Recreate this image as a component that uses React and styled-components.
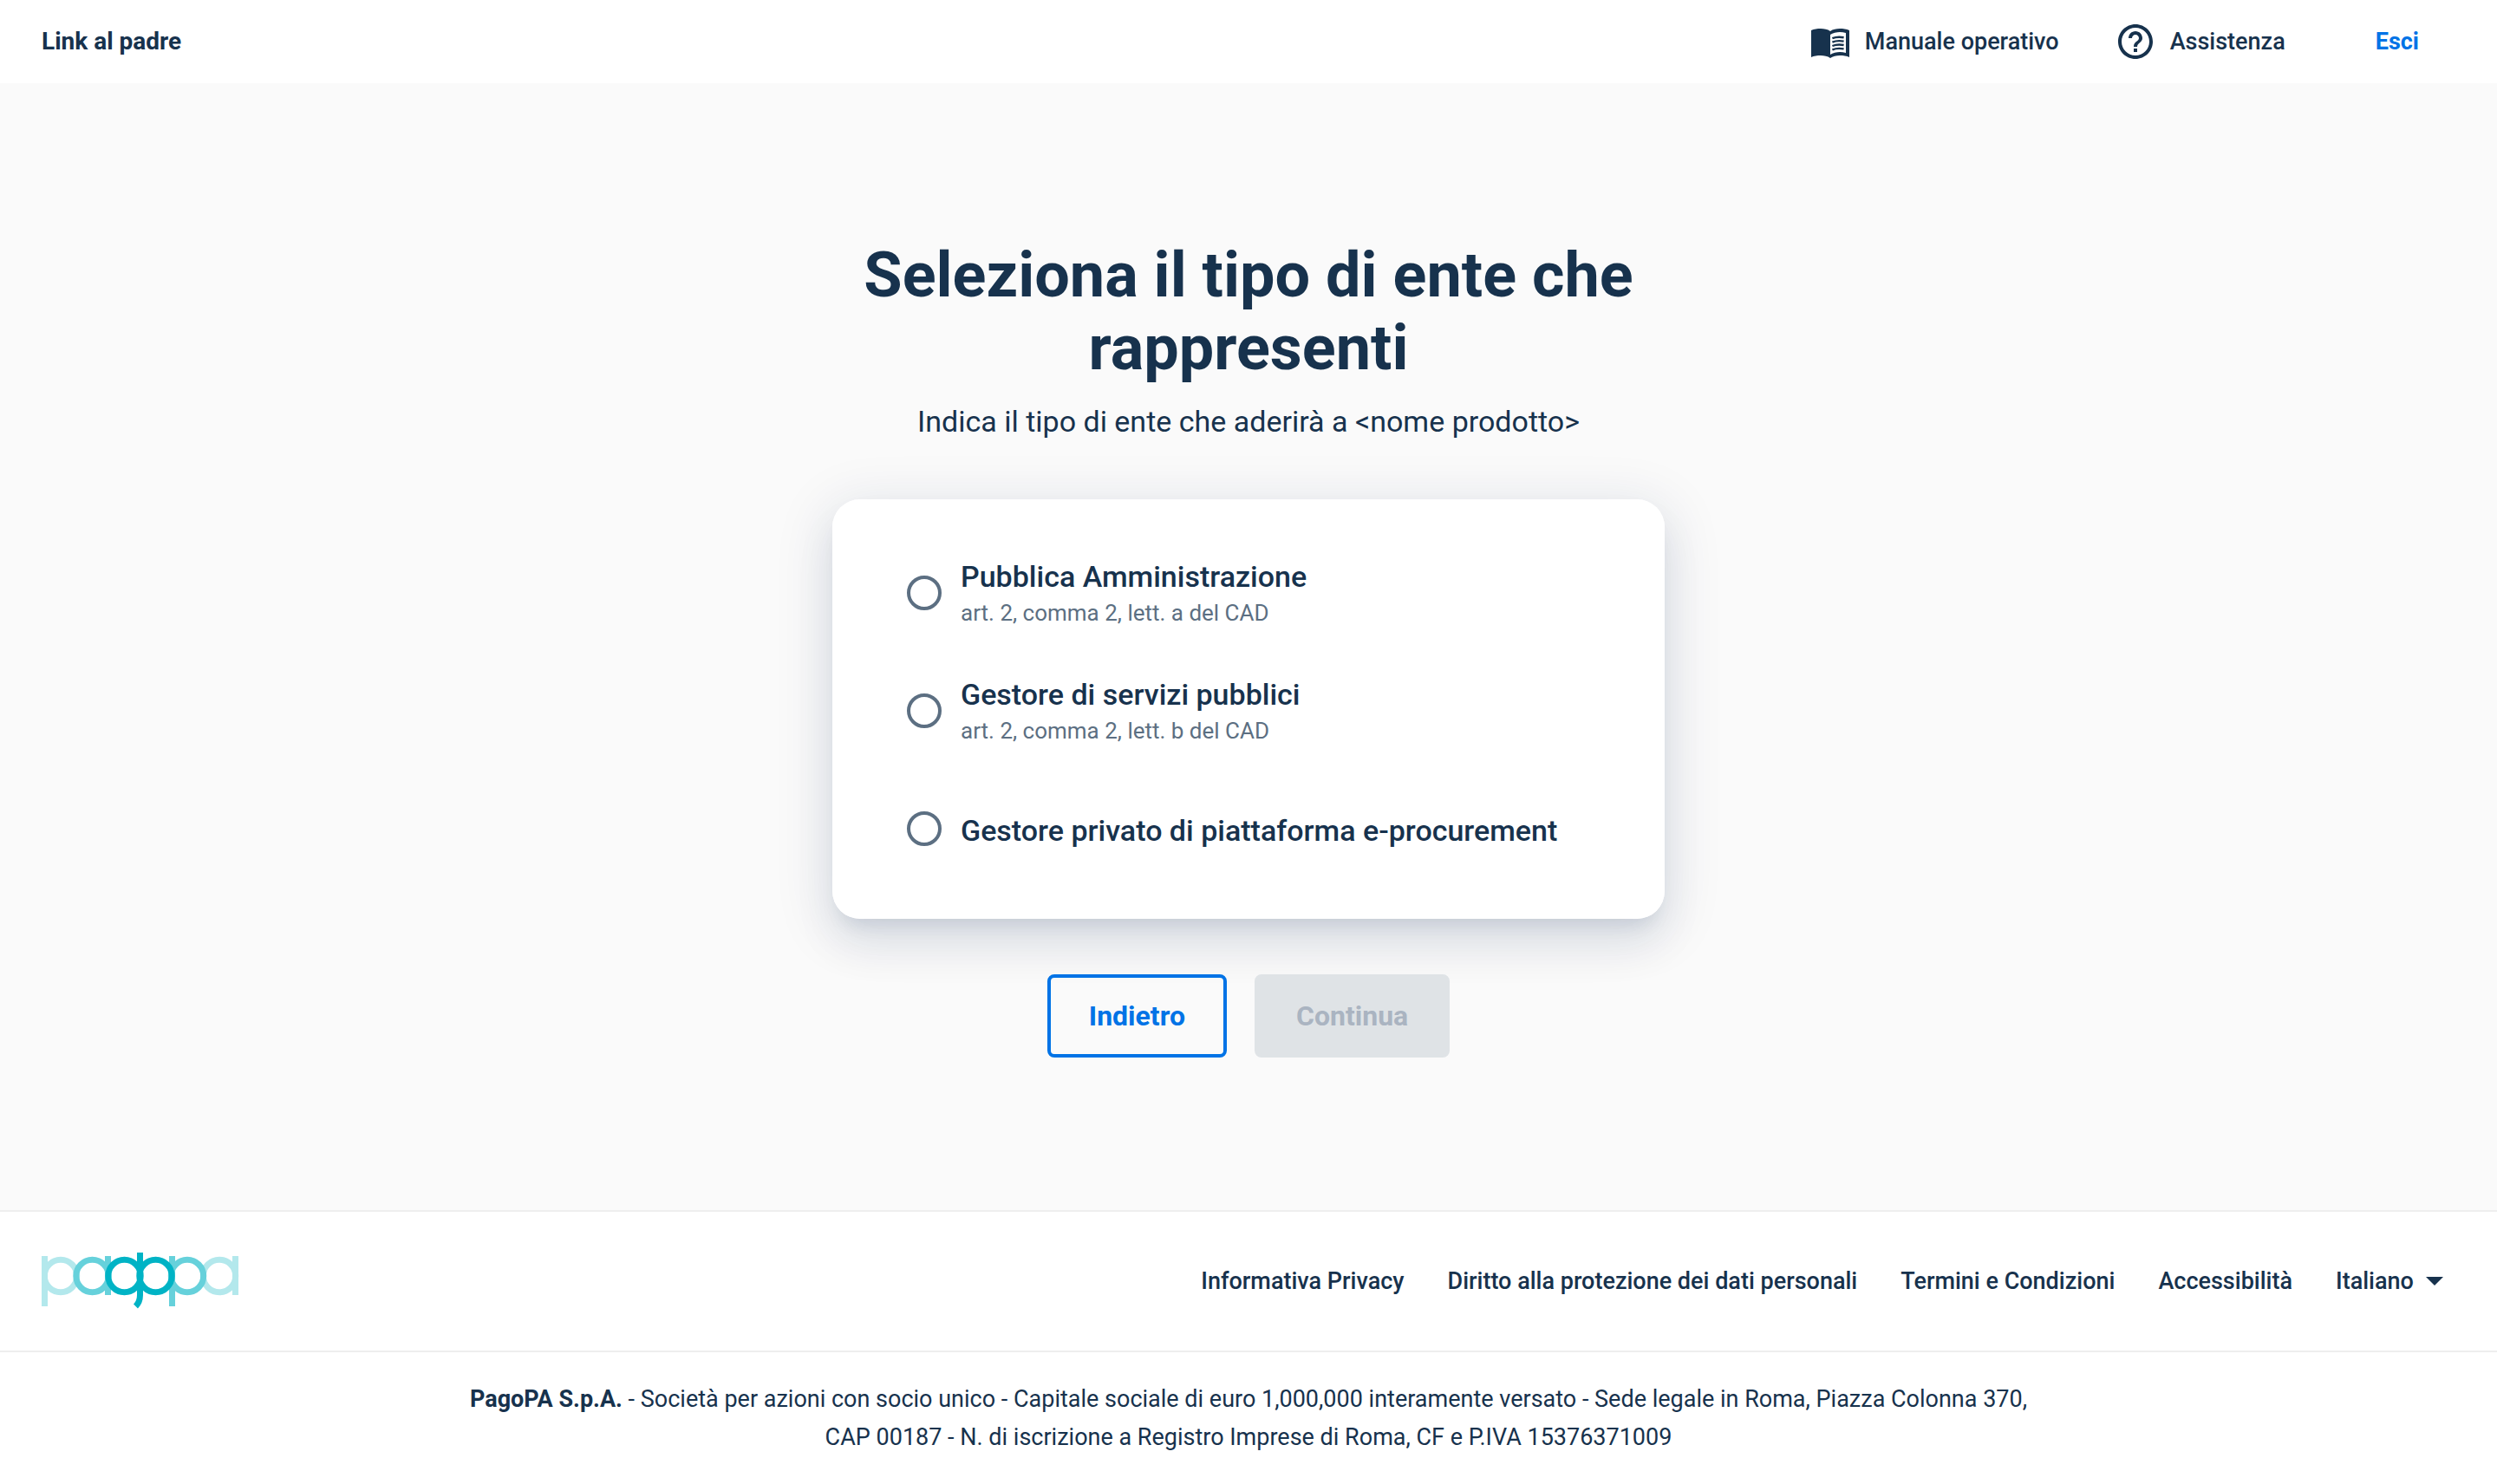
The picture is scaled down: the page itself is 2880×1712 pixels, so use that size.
import React from "react";
import styled, { createGlobalStyle, css } from "styled-components";

const Global = createGlobalStyle`
  *, *::before, *::after { box-sizing: border-box; }
  body { margin: 0; background: #ffffff; color: #17324d; font-family: Roboto, "Liberation Sans", sans-serif; }
  button, select, input { font-family: inherit; }
`;

const Page = styled.div`
  min-height: 100vh;
  display: flex;
  flex-direction: column;
`;

const TopBar = styled.header`
  height: 96px;
  padding: 0 90px 0 48px;
  display: flex;
  align-items: center;
  justify-content: space-between;
`;

const ParentLink = styled.a`
  color: #17324d;
  font-size: 28px;
  line-height: 32px;
  font-weight: 700;
  text-decoration: none;
`;

const Actions = styled.nav`
  display: flex;
  align-items: center;
  gap: 64px;
`;

const Action = styled.button`
  display: flex;
  align-items: center;
  gap: 16px;
  padding: 0;
  border: 0;
  background: none;
  color: #17324d;
  font-size: 27px;
  line-height: 32px;
  font-weight: 500;
  svg { width: 48px; height: 48px; fill: currentColor; }
`;

const Exit = styled.button`
  margin-left: 40px;
  padding: 0;
  border: 0;
  background: none;
  color: #0073e6;
  font-size: 27px;
  line-height: 32px;
  font-weight: 700;
`;

const Main = styled.main`
  flex: 1;
  display: flex;
  flex-direction: column;
  align-items: center;
  padding: 180px 48px 176px;
  background: #fafafa;
`;

const Title = styled.h1`
  max-width: 960px;
  margin: 0;
  font-size: 72px;
  line-height: 84px;
  font-weight: 700;
  text-align: center;
`;

const Subtitle = styled.p`
  margin: 16px 0 64px;
  font-size: 34px;
  line-height: 52px;
  font-weight: 400;
  text-align: center;
`;

const Card = styled.fieldset`
  width: 100%;
  max-width: 960px;
  margin: 0;
  padding: 64px 64px 60px 84px;
  border: 0;
  border-radius: 32px;
  background: #ffffff;
  box-shadow:
    0 16px 20px -10px rgba(0, 43, 85, 0.1),
    0 32px 48px 4px rgba(0, 43, 85, 0.05),
    0 12px 60px 10px rgba(0, 43, 85, 0.1);
`;

const Option = styled.label`
  display: flex;
  align-items: center;
  gap: 20px;
  min-height: 88px;
  margin-bottom: 48px;
  cursor: pointer;
  &:last-child { margin-bottom: 0; }
`;

const Radio = styled.input`
  appearance: none;
  flex: none;
  width: 40px;
  height: 40px;
  margin: 0 2px;
  border: 4px solid #5c6f82;
  border-radius: 50%;
  background: #ffffff;
  &:checked { border-color: #0073e6; background: radial-gradient(#0073e6 45%, #ffffff 50%); }
`;

const OptionText = styled.span`
  display: flex;
  flex-direction: column;
  padding-top: 4px;
`;

const OptionName = styled.span`
  font-size: 34px;
  line-height: 42px;
  font-weight: 500;
`;

const OptionNote = styled.span`
  color: #5c6f82;
  font-size: 26px;
  line-height: 42px;
`;

const Buttons = styled.div`
  display: flex;
  gap: 32px;
  margin-top: 64px;
`;

const Button = styled.button`
  height: 96px;
  padding: 0 44px;
  border: 4px solid #0073e6;
  border-radius: 8px;
  background: transparent;
  color: #0073e6;
  font-size: 32px;
  line-height: 40px;
  font-weight: 700;
  ${(p) => p.disabled && css`
    border-color: #dfe3e6;
    background: #dfe3e6;
    color: #aab4c1;
  `}
`;

const FooterBar = styled.div`
  display: flex;
  align-items: center;
  justify-content: space-between;
  height: 164px;
  padding: 0 62px 0 48px;
  border-top: 2px solid #eeeeee;
  border-bottom: 2px solid #eeeeee;
`;

const Logo = styled.svg`
  width: 228px;
  height: 66px;
`;

const FooterLinks = styled.nav`
  display: flex;
  align-items: center;
  gap: 50px;
`;

const FooterLink = styled.a`
  color: #17324d;
  font-size: 27px;
  line-height: 40px;
  font-weight: 500;
  text-decoration: none;
`;

const Language = styled.span`
  display: flex;
  align-items: center;
  gap: 14px;
  svg { width: 20px; height: 10px; fill: #17324d; }
`;

const LanguageSelect = styled.select`
  appearance: none;
  padding: 0;
  border: 0;
  background: none;
  color: #17324d;
  font-size: 27px;
  line-height: 40px;
  font-weight: 500;
`;

const Legal = styled.p`
  max-width: 1920px;
  margin: 0 auto;
  padding: 32px 48px;
  font-size: 27px;
  line-height: 44px;
  text-align: center;
  strong { font-weight: 700; }
`;

const OPTIONS = [
  { id: "pa", name: "Pubblica Amministrazione", note: "art. 2, comma 2, lett. a del CAD" },
  { id: "gsp", name: "Gestore di servizi pubblici", note: "art. 2, comma 2, lett. b del CAD" },
  { id: "ep", name: "Gestore privato di piattaforma e-procurement" },
];

const LINKS = ["Informativa Privacy", "Diritto alla protezione dei dati personali", "Termini e Condizioni", "Accessibilità"];

const BookIcon = () => (
  <svg viewBox="0 0 24 24" aria-hidden="true">
    <path d="M23 5.500c-1.600-.7-3.600-1-5.500-1-1.950 0-4.050.4-5.500 1.500-1.450-1.100-3.550-1.500-5.500-1.500S2.600 4.800 1 5.500V21c1.500-.7 3.500-1 5.500-1 1.950 0 4.050.4 5.500 1.500 1.350-.85 3.550-1.500 5.500-1.500 2 0 4 .3 5.500 1zM21 18.500c-1.100-.35-2.300-.5-3.500-.5-1.700 0-4.150.65-5.500 1.500V8c1.350-.85 3.800-1.500 5.500-1.500 1.200 0 2.400.15 3.500.5z" />
    <path
      d="M13.200 10.100c1.900-.8 4.400-.9 6.600-.5M13.200 12.300c1.900-.8 4.400-.9 6.600-.5M13.200 14.500c1.900-.8 4.400-.9 6.600-.5M13.200 16.700c1.900-.8 4.400-.9 6.600-.5"
      fill="none"
      stroke="currentColor"
      strokeWidth="1.200"
    />
  </svg>
);

const HelpIcon = () => (
  <svg viewBox="0 0 24 24" aria-hidden="true">
    <path d="M11 18h2v-2h-2zm1-16C6.480 2 2 6.480 2 12s4.480 10 10 10 10-4.480 10-10S17.520 2 12 2m0 18c-4.410 0-8-3.590-8-8s3.590-8 8-8 8 3.590 8 8-3.590 8-8 8m0-14c-2.210 0-4 1.790-4 4h2c0-1.100.9-2 2-2s2 .9 2 2c0 2-3 1.750-3 5h2c0-2.250 3-2.500 3-5 0-2.210-1.790-4-4-4" />
  </svg>
);

const PagoPaLogo = () => (
  <Logo viewBox="0 0 228 66" role="img" aria-label="PagoPA" fill="none" strokeWidth="7">
    <g stroke="#b3e8ec">
      <path d="M3.500 4v58M223.500 4v45" />
      <circle cx="22" cy="27" r="18.700" />
      <circle cx="205" cy="27" r="18.700" />
    </g>
    <g stroke="#66d1db">
      <path d="M76.500 4v45M150.500 4v58" />
      <circle cx="58.500" cy="27" r="18.700" />
      <circle cx="168" cy="27" r="18.700" />
    </g>
    <g stroke="#00b3c5">
      <circle cx="95.500" cy="27" r="18.700" />
      <circle cx="131.500" cy="27" r="18.700" />
      <path d="M113.500 0v49c0 6-1.500 9.500-5 13" />
    </g>
  </Logo>
);

export default function App() {
  return (
    <Page>
      <Global />
      <TopBar>
        <ParentLink href="#">Link al padre</ParentLink>
        <Actions>
          <Action type="button"><BookIcon />Manuale operativo</Action>
          <Action type="button"><HelpIcon />Assistenza</Action>
          <Exit type="button">Esci</Exit>
        </Actions>
      </TopBar>
      <Main>
        <Title>Seleziona il tipo di ente che rappresenti</Title>
        <Subtitle>Indica il tipo di ente che aderirà a &lt;nome prodotto&gt;</Subtitle>
        <Card aria-label="Tipo di ente">
          {OPTIONS.map((o) => (
            <Option key={o.id} htmlFor={o.id}>
              <Radio type="radio" name="ente" id={o.id} />
              <OptionText>
                <OptionName>{o.name}</OptionName>
                {o.note && <OptionNote>{o.note}</OptionNote>}
              </OptionText>
            </Option>
          ))}
        </Card>
        <Buttons>
          <Button type="button">Indietro</Button>
          <Button type="button" disabled>Continua</Button>
        </Buttons>
      </Main>
      <footer>
        <FooterBar>
          <PagoPaLogo />
          <FooterLinks>
            {LINKS.map((l) => <FooterLink key={l} href="#">{l}</FooterLink>)}
            <Language>
              <LanguageSelect aria-label="Lingua"><option>Italiano</option></LanguageSelect>
              <svg viewBox="0 0 20 10" aria-hidden="true"><path d="M0 0h20L10 10z" /></svg>
            </Language>
          </FooterLinks>
        </FooterBar>
        <Legal>
          <strong>PagoPA S.p.A.</strong> - Società per azioni con socio unico - Capitale sociale di euro 1,000,000 interamente versato - Sede legale in Roma, Piazza Colonna 370, CAP 00187 - N. di iscrizione a Registro Imprese di Roma, CF e P.IVA 15376371009
        </Legal>
      </footer>
    </Page>
  );
}
